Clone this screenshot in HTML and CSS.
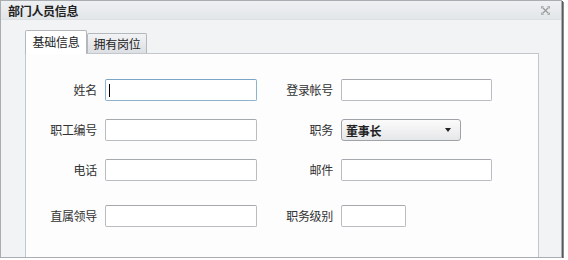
FILE: index.html
```html
<!DOCTYPE html>
<html lang="zh">
<head>
<meta charset="utf-8">
<link rel="stylesheet" href="styles.css">
</head>
<body>
<div class="window">
  <div class="titlebar">
    <span class="title">部门人员信息</span>
    <svg class="close" width="9" height="9" viewBox="0 0 9 9">
      <path d="M1.5 1.5 L7.5 7.5 M7.5 1.5 L1.5 7.5" stroke="#9a9a9a" stroke-width="1.2" fill="none"/>
      <path d="M0.5 2.5 V0.5 H2.5 M6.5 0.5 H8.5 V2.5 M8.5 6.5 V8.5 H6.5 M2.5 8.5 H0.5 V6.5" stroke="#a8a8a8" stroke-width="1" fill="none"/>
    </svg>
  </div>
  <div class="body">
    <div class="tabs">
      <div class="tab active">基础信息</div>
      <div class="tab">拥有岗位</div>
    </div>
    <div class="panel">
      <div class="form">
        <div class="label">姓名</div>
        <div class="field focus"><span class="caret"></span></div>
        <div class="label">登录帐号</div>
        <div class="field"></div>

        <div class="label">职工编号</div>
        <div class="field"></div>
        <div class="label">职务</div>
        <div class="select"><span class="sel-text">董事长</span><span class="arrow"></span></div>

        <div class="label">电话</div>
        <div class="field"></div>
        <div class="label">邮件</div>
        <div class="field"></div>

        <div class="label last">直属领导</div>
        <div class="field last"></div>
        <div class="label last">职务级别</div>
        <div class="field short last"></div>
      </div>
    </div>
  </div>
</div>
</body>
</html>
```

FILE: styles.css
```css
html, body {
  margin: 0;
  padding: 0;
  background: #ffffff;
  font-family: "Noto Sans CJK SC", "Noto Sans", sans-serif;
  font-size: 12px;
  color: #333;
}

.window {
  width: 560px;
  height: 256px;
  border: 1px solid #a9adb2;
  box-shadow: 1px 1px 0 #5a5a5a, 2px 2px 0 #8a8a8a;
  background: #f1f3f5;
  overflow: hidden;
  display: flex;
  flex-direction: column;
}

.titlebar {
  height: 19px;
  flex: none;
  display: flex;
  align-items: center;
  justify-content: space-between;
  padding: 0 11px 0 7px;
  background: linear-gradient(#eef0f2, #e3e6e9);
  border-bottom: 1px solid #dde0e3;
  box-sizing: border-box;
}

.title {
  font-weight: bold;
  font-size: 12px;
  color: #222;
  letter-spacing: -0.3px;
  line-height: 19px;
}

.close {
  display: block;
}

.body {
  flex: 1;
  padding: 10px 0 0 24px;
  display: flex;
  flex-direction: column;
}

.tabs {
  display: flex;
  align-items: flex-end;
  height: 23px;
}

.tab {
  height: 20px;
  box-sizing: border-box;
  border: 1px solid #b4b8bd;
  border-bottom: none;
  border-radius: 2px 2px 0 0;
  background: linear-gradient(#f2f3f5, #dcdfe3);
  padding: 0;
  line-height: 19px;
  color: #222;
  width: 60px;
  text-align: center;
  white-space: nowrap;
  letter-spacing: -0.3px;
}

.tab.active {
  height: 24px;
  width: 62px;
  margin-bottom: -1px;
  background: #ffffff;
  line-height: 22px;
  position: relative;
  z-index: 1;
  border-color: #b4b8bd;
}

.panel {
  width: 514px;
  flex: 1;
  box-sizing: border-box;
  border: 1px solid #c3c7cb;
  border-bottom: none;
  background: #fdfdfd;
  padding-top: 25px;
}

.form {
  display: grid;
  grid-template-columns: 71px 152px 68px 151px;
  grid-template-rows: 22px 22px 22px 28px;
  column-gap: 8px;
  row-gap: 18px;
  align-items: center;
}

.label {
  text-align: right;
  color: #333;
  line-height: 22px;
  letter-spacing: -0.3px;
}

.last {
  align-self: end;
}

.field {
  height: 22px;
  box-sizing: border-box;
  border: 1px solid #b9bcc0;
  border-top-color: #a5a8ac;
  border-radius: 2px;
  background: #fff;
  position: relative;
}

.field.focus {
  border-color: #8db2cf;
  border-top-color: #7ea4c3;
}

.caret {
  position: absolute;
  left: 3px;
  top: 4px;
  width: 1px;
  height: 13px;
  background: #000;
}

.field.short {
  width: 65px;
}

.select {
  width: 120px;
  height: 22px;
  box-sizing: border-box;
  border: 1px solid #9fa3a8;
  border-radius: 3px;
  background: linear-gradient(#fbfbfb, #e6e7e9);
  display: flex;
  align-items: center;
  justify-content: space-between;
  padding: 0 9px 0 4px;
}

.sel-text {
  font-weight: bold;
  color: #222;
  letter-spacing: -0.3px;
}

.arrow {
  width: 0;
  height: 0;
  border-left: 3px solid transparent;
  border-right: 3px solid transparent;
  border-top: 4px solid #222;
}
```
